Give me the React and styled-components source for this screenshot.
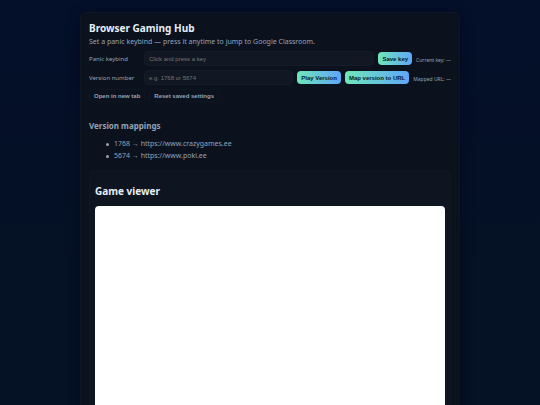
import React, { useState } from "react";
import styled, { createGlobalStyle } from "styled-components";

const mappings = [
  { version: "1768", url: "https://www.crazygames.ee" },
  { version: "5674", url: "https://www.poki.ee" },
];

const App = () => {
  const [panicKey, setPanicKey] = useState("");
  const [version, setVersion] = useState("");

  return (
    <>
      <GlobalStyle />
      <Page>
        <Card>
          <Title>Browser Gaming Hub</Title>
          <Lead>
            Set a panic keybind — press it anytime to jump to Google Classroom.
          </Lead>

          <Controls>
            <Row>
              <Label htmlFor="panic">Panic keybind</Label>
              <Field
                id="panic"
                type="text"
                placeholder="Click and press a key"
                value={panicKey}
                onChange={(e) => setPanicKey(e.target.value)}
              />
              <Button type="button">Save key</Button>
              <Status>Current key: —</Status>
            </Row>
            <Row>
              <Label htmlFor="version">Version number</Label>
              <Field
                id="version"
                type="text"
                placeholder="e.g. 1768 or 5674"
                value={version}
                onChange={(e) => setVersion(e.target.value)}
              />
              <Button type="button">Play Version</Button>
              <Button type="button">Map version to URL</Button>
              <Status>Mapped URL: —</Status>
            </Row>
            <Row>
              <Button type="button" $ghost>
                Open in new tab
              </Button>
              <Button type="button" $ghost>
                Reset saved settings
              </Button>
            </Row>
          </Controls>

          <Subtitle>Version mappings</Subtitle>
          <MappingList>
            {mappings.map((m) => (
              <Mapping key={m.version}>
                {m.version} → {m.url}
              </Mapping>
            ))}
          </MappingList>

          <Viewer>
            <ViewerTitle>Game viewer</ViewerTitle>
            <Frame title="Game viewer" />
          </Viewer>
        </Card>
      </Page>
    </>
  );
};

const GlobalStyle = createGlobalStyle`
  * {
    box-sizing: border-box;
  }

  body {
    margin: 0;
    background: #051024;
    color: #e6eef8;
    font-family: "Noto Sans", sans-serif;
  }
`;

const Page = styled.main`
  display: flex;
  justify-content: center;
  min-height: 100vh;
  padding: 12px;
  background: linear-gradient(180deg, #040f2a 0%, #051124 60%);
`;

const Card = styled.div`
  width: 100%;
  max-width: 380px;
  padding: 8px;
  border: 1px solid #0e1621;
  border-radius: 5px;
  background: #0b121e;
  box-shadow: 0 3px 12px rgba(2, 6, 23, 0.6);
`;

const Title = styled.h1`
  margin: 0;
  font-size: 10px;
  line-height: 14px;
`;

const Lead = styled.p`
  margin: 0;
  color: #94a3b8;
  font-size: 7px;
  line-height: 14px;
`;

const Controls = styled.div`
  display: flex;
  flex-direction: column;
  gap: 4px;
  margin-top: 2px;
`;

const Row = styled.div`
  display: flex;
  align-items: center;
  gap: 4px;
`;

const Label = styled.label`
  flex: 0 0 51px;
  color: #94a3b8;
  font-size: 6px;
`;

const Field = styled.input`
  flex: 1;
  min-width: 0;
  height: 15px;
  padding: 0 4px;
  border: 1px solid #151c28;
  border-radius: 4px;
  background: #111824;
  color: #e6eef8;
  font-family: "Liberation Sans", Arial, sans-serif;
  font-size: 6px;

  &::placeholder {
    color: #757575;
    opacity: 1;
  }
`;

const Button = styled.button`
  height: 13px;
  padding: 0 4px;
  border: ${(props) => (props.$ghost ? "1px solid #0e1622" : "none")};
  border-radius: 4px;
  background: ${(props) =>
    props.$ghost ? "transparent" : "linear-gradient(90deg, #6ee7b7, #60a5fa)"};
  color: ${(props) => (props.$ghost ? "#94a3b8" : "#04202a")};
  font-family: "Liberation Sans", Arial, sans-serif;
  font-size: 6px;
  font-weight: 700;
  white-space: nowrap;
  cursor: pointer;
`;

const Status = styled.span`
  padding-top: 2px;
  color: #94a3b8;
  font-size: 5px;
  white-space: nowrap;
`;

const Subtitle = styled.h3`
  margin: 18px 0 6px;
  color: #94a3b8;
  font-size: 8px;
  line-height: 12px;
`;

const MappingList = styled.ul`
  margin: 0;
  padding-left: 17px;
  color: #94a3b8;
  font-size: 7px;
  line-height: 12px;
  list-style: none;
`;

const Mapping = styled.li`
  display: flex;
  align-items: center;

  &::before {
    content: "";
    width: 3px;
    height: 3px;
    margin-right: 5px;
    border-radius: 50%;
    background: #94a3b8;
  }
`;

const Viewer = styled.section`
  margin-top: 8px;
  padding: 5px;
  border: 1px solid #101722;
  border-radius: 4px;
  background: #0f1520;
`;

const ViewerTitle = styled.h2`
  margin: 8px 0;
  font-size: 10px;
  line-height: 14px;
`;

const Frame = styled.iframe`
  display: block;
  width: 100%;
  height: 60vh;
  border: none;
  border-radius: 4px;
  background: #ffffff;
`;

export default App;
